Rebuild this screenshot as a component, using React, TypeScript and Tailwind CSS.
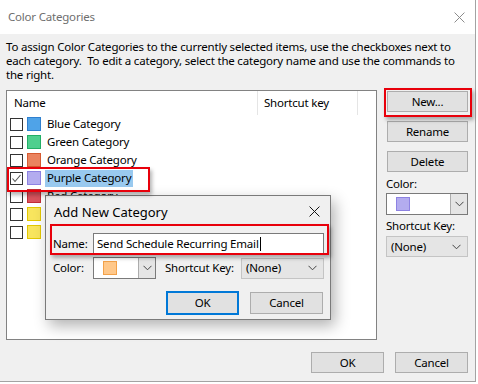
import { JSX } from "react";

const categories = [
  { name: "Blue Category", fill: "bg-[#4fa3e8]", edge: "border-[#2f80cf]" },
  { name: "Green Category", fill: "bg-[#4ecf8e]", edge: "border-[#22ae66]" },
  { name: "Orange Category", fill: "bg-[#ea835f]", edge: "border-[#d65a30]" },
  { name: "Purple Category", fill: "bg-[#b3acef]", edge: "border-[#8d82e2]", checked: true },
  { name: "Red Category", fill: "bg-[#d9535d]", edge: "border-[#c12c37]" },
  { name: "Yellow Category", fill: "bg-[#f8e55e]", edge: "border-[#e3c800]" },
  { name: "Yellow Category", fill: "bg-[#f8e55e]", edge: "border-[#e3c800]" },
];

function Chevron(): JSX.Element {
  return (
    <svg width="9" height="6" viewBox="0 0 9 6">
      <polyline points="0.5,0.8 4.5,4.8 8.5,0.8" fill="none" stroke="#444" strokeWidth="1" />
    </svg>
  );
}

function CloseX({ color, size }: { color: string; size: number }): JSX.Element {
  return (
    <svg width={size} height={size} viewBox="0 0 10 10">
      <path d="M0.5 0.5 L9.5 9.5 M9.5 0.5 L0.5 9.5" stroke={color} strokeWidth="0.9" fill="none" />
    </svg>
  );
}

function Button({ label, className = "" }: { label: string; className?: string }): JSX.Element {
  return (
    <div className={`flex items-center justify-center bg-[#e1e1e1] border border-[#adadad] text-black ${className}`}>
      {label}
    </div>
  );
}

function RedBox({ className }: { className: string }): JSX.Element {
  return (
    <div className={`absolute border-2 border-[#e8000b] shadow-[2px_3px_4px_rgba(0,0,0,0.3)] ${className}`} />
  );
}

export default function App(): JSX.Element {
  return (
    <div
      className="relative w-[478px] h-[384px] bg-white overflow-hidden text-[11.5px] tracking-[-0.2px] leading-[14px] text-black"
      style={{ fontFamily: '"Segoe UI", "Noto Sans", sans-serif' }}
    >
      <div className="w-[476px] h-[382px] bg-[#f0f0f0] border-r border-b border-[#a3a3a3] flex flex-col">
        {/* title bar */}
        <div className="h-[34px] bg-white flex items-center justify-between pl-[8px] pr-[10px]">
          <span className="text-[#6e6e6e]">Color Categories</span>
          <CloseX color="#8a8a8a" size={11} />
        </div>

        <p className="px-[6px] pt-[6px]">
          To assign Color Categories to the currently selected items, use the checkboxes next to each category.&nbsp; To edit a category, select the category name and use the commands to the right.
        </p>

        <div className="flex mt-[8px] ml-[6px]">
          {/* category list */}
          <div className="w-[371px] h-[250px] bg-white border border-[#828282]">
            <div className="flex h-[24px] items-center">
              <div className="w-[250px] pl-[7px]">Name</div>
              <div className="w-[101px] h-full border-l border-r border-[#e5e5e5] pl-[6px] flex items-center">Shortcut key</div>
            </div>
            <div className="flex flex-col">
              {categories.map((c, i) => (
                <div key={i} className="flex items-center h-[18px] pl-[3px]">
                  <div className="w-[13px] h-[13px] border border-[#333] bg-white flex items-center justify-center">
                    {c.checked && (
                      <svg width="11" height="11" viewBox="0 0 11 11">
                        <polyline points="1.5,5.5 4,8.5 9.5,2" fill="none" stroke="#555" strokeWidth="1.1" />
                      </svg>
                    )}
                  </div>
                  <div className={`ml-[4px] w-[14px] h-[14px] border ${c.fill} ${c.edge}`} />
                  <span className={`ml-[4px] px-[2px] h-[17px] flex items-center ${c.checked ? "bg-[#99c9ef]" : ""}`}>
                    {c.name}
                  </span>
                </div>
              ))}
            </div>
          </div>

          {/* command buttons */}
          <div className="ml-[9px] w-[82px] flex flex-col">
            <Button label="New..." className="ml-[1px] w-[81px] h-[21px] mt-[1px]" />
            <Button label="Rename" className="ml-[1px] w-[81px] h-[21px] mt-[9px]" />
            <Button label="Delete" className="ml-[1px] w-[81px] h-[21px] mt-[9px]" />
            <span className="mt-[5px]">Color:</span>
            <div className="mt-[2px] h-[22px] flex bg-white border border-[#7a7a7a]">
              <div className="flex-1 flex items-center pl-[9px]">
                <div className="w-[14px] h-[14px] bg-[#b3acef] border border-[#8d82e2]" />
              </div>
              <div className="w-[17px] bg-[#e5e5e5] border-l border-[#acacac] flex items-center justify-center">
                <Chevron />
              </div>
            </div>
            <span className="mt-[4px]">Shortcut Key:</span>
            <div className="mt-[3px] h-[21px] flex items-center justify-between bg-[#e5e5e5] border border-[#c4c4c4] pl-[4px] pr-[6px]">
              <span>(None)</span>
              <Chevron />
            </div>
          </div>
        </div>

        <div className="flex justify-end gap-[11px] pr-[7px] mt-[12px]">
          <Button label="OK" className="w-[73px] h-[21px]" />
          <Button label="Cancel" className="w-[73px] h-[21px]" />
        </div>
      </div>

      {/* Add New Category dialog */}
      <div className="absolute left-[45px] top-[195px] w-[286px] h-[125px] bg-[#f0f0f0] border border-[#7a7a7a] shadow-[4px_6px_14px_rgba(0,0,0,0.3)] flex flex-col pl-[7px]">
        <div className="h-[31px] flex items-center justify-between pl-[1px] pr-[10px]">
          <span className="text-[13px] tracking-normal">Add New Category</span>
          <CloseX color="#111" size={11} />
        </div>
        <div className="flex items-center mt-[6px]">
          <span className="w-[40px]">Name:</span>
          <div className="w-[231px] h-[21px] bg-white border border-[#7a7a7a] flex items-center pl-[3px]">
            <span>Send Schedule Recurring Email</span>
            <span className="ml-[1px] w-px h-[14px] bg-black" />
          </div>
        </div>
        <div className="flex items-center mt-[3px]">
          <span className="w-[40px]">Color:</span>
          <div className="w-[63px] h-[22px] flex bg-white border border-[#7a7a7a]">
            <div className="flex-1 flex items-center pl-[9px]">
              <div className="w-[14px] h-[14px] bg-[#ffc88a] border border-[#f3a24a]" />
            </div>
            <div className="w-[17px] bg-[#e5e5e5] border-l border-[#acacac] flex items-center justify-center">
              <Chevron />
            </div>
          </div>
          <span className="ml-[9px] w-[76px]">Shortcut Key:</span>
          <div className="w-[83px] h-[21px] flex items-center justify-between bg-[#e5e5e5] border border-[#c4c4c4] pl-[4px] pr-[6px]">
            <span>(None)</span>
            <Chevron />
          </div>
        </div>
        <div className="flex mt-[12px] ml-[113px] items-center gap-[11px]">
          <div className="w-[73px] h-[24px] flex items-center justify-center bg-[#e1e1e1] border-2 border-[#0078d7]">OK</div>
          <Button label="Cancel" className="w-[73px] h-[22px]" />
        </div>
      </div>

      {/* annotation boxes */}
      <RedBox className="left-[384px] top-[88px] w-[88px] h-[29px]" />
      <RedBox className="left-[7px] top-[167px] w-[143px] h-[25px]" />
      <RedBox className="left-[50px] top-[224px] w-[279px] h-[31px]" />
    </div>
  );
}
